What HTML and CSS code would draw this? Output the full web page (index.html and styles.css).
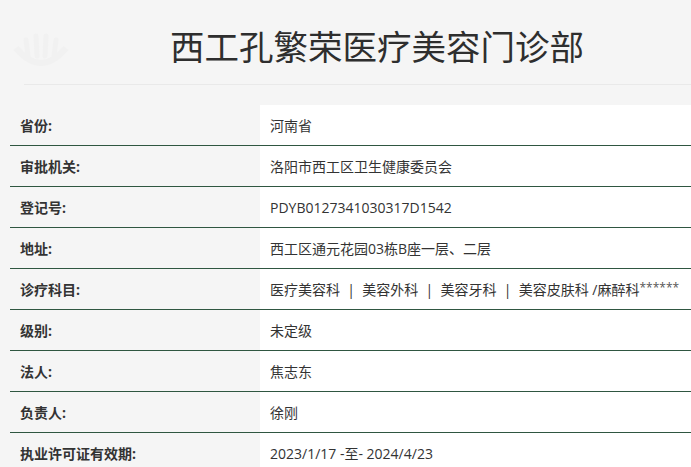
FILE: index.html
```html
<!DOCTYPE html>
<html lang="zh">
<head>
<meta charset="utf-8">
<link rel="stylesheet" href="styles.css">
</head>
<body>
<div class="page">
  <header class="head">
    <div class="mark">
      <svg width="70" height="70" viewBox="0 0 70 70"><path d="M10 30 Q35 60 60 30" fill="none" stroke="#f1f1f1" stroke-width="6"/><path d="M20 22 L22 38 M30 18 L31 38 M40 18 L39 38 M50 22 L48 38" stroke="#f1f1f1" stroke-width="5" stroke-linecap="round"/></svg>
    </div>
    <h1 class="title">西工孔繁荣医疗美容门诊部</h1>
  </header>
  <div class="rule"></div>
  <div class="info">
    <div class="row"><div class="k">省份:</div><div class="v">河南省</div></div>
    <div class="row"><div class="k">审批机关:</div><div class="v">洛阳市西工区卫生健康委员会</div></div>
    <div class="row"><div class="k">登记号:</div><div class="v">PDYB0127341030317D1542</div></div>
    <div class="row"><div class="k">地址:</div><div class="v">西工区通元花园03栋B座一层、二层</div></div>
    <div class="row"><div class="k">诊疗科目:</div><div class="v">医疗美容科 &nbsp;|&nbsp; 美容外科 &nbsp;|&nbsp; 美容牙科 &nbsp;|&nbsp; 美容皮肤科 /麻醉科<span class="stars">******</span></div></div>
    <div class="row"><div class="k">级别:</div><div class="v">未定级</div></div>
    <div class="row"><div class="k">法人:</div><div class="v">焦志东</div></div>
    <div class="row"><div class="k">负责人:</div><div class="v">徐刚</div></div>
    <div class="row"><div class="k">执业许可证有效期:</div><div class="v">2023/1/17 -至- 2024/4/23</div></div>
  </div>
</div>
</body>
</html>
```

FILE: styles.css
```css
html, body {
  margin: 0;
  padding: 0;
  background: #f5f5f5;
  overflow: hidden;
}
body {
  font-family: "Open Sans", "Noto Sans CJK SC", sans-serif;
  color: #333;
}
.page {
  width: 691px;
  height: 467px;
  overflow: hidden;
}
.head {
  position: relative;
  height: 84px;
}
.mark {
  position: absolute;
  left: 6px;
  top: 18px;
}
.title {
  margin: 0;
  padding: 20px 0 0 170px;
  font-family: "Noto Sans CJK SC", sans-serif;
  font-size: 34.5px;
  font-weight: 400;
  line-height: 50px;
  color: #2e2e2e;
  white-space: nowrap;
}
.rule {
  margin-left: 24px;
  height: 1px;
  background: #e9e9e9;
}
.info {
  margin: 20px 0 0 10px;
  width: 700px;
}
.row {
  display: grid;
  grid-template-columns: 250px 1fr;
  height: 40px;
  border-bottom: 1px solid #2f5641;
}
.k, .v {
  display: flex;
  align-items: center;
  font-size: 14px;
  white-space: nowrap;
}
.k {
  padding-left: 10px;
  font-weight: 700;
  color: #333;
}
.v {
  padding-left: 10px;
  background: #fff;
  color: #333;
}
.stars {
  font-size: 12px;
  align-self: center;
  margin-top: -4px;
  color: #555;
}
```
